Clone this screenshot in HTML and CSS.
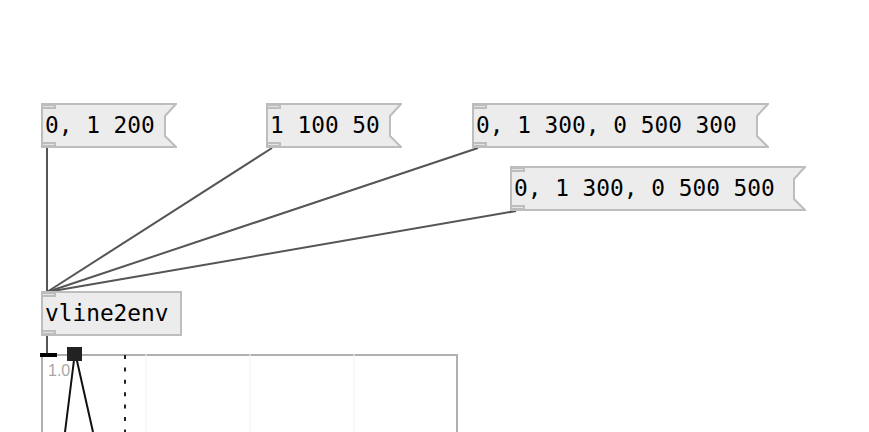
FILE: index.html
```html
<!DOCTYPE html>
<html lang="en">
<head>
  <meta charset="UTF-8">
  <meta name="viewport" content="width=device-width, initial-scale=1.0">
  <title>vline2env patch</title>
  <link rel="stylesheet" href="styles.css">
</head>
<body>
  <div class="patch">
    <!-- connections -->
    <svg class="wires" width="869" height="432">
      <line x1="47" y1="148" x2="47" y2="292" />
      <line x1="272" y1="148" x2="47" y2="292" />
      <line x1="478" y1="148" x2="47" y2="292" />
      <line x1="516" y1="211" x2="47" y2="292" />
      <line x1="47" y1="336" x2="47" y2="354" />
    </svg>

    <div class="node msg m1">
      <svg class="flag" width="136" height="45"><polygon points="1,1 135,1 124,13 124,33 135,44 1,44" /></svg>
      <span class="port in"></span><span class="port out"></span>
      <span class="label">0, 1 200</span>
    </div>
    <div class="node msg m2">
      <svg class="flag" width="136" height="45"><polygon points="1,1 135,1 124,13 124,33 135,44 1,44" /></svg>
      <span class="port in"></span><span class="port out"></span>
      <span class="label">1 100 50</span>
    </div>
    <div class="node msg m3">
      <svg class="flag" width="297" height="45"><polygon points="1,1 296,1 285,13 285,33 296,44 1,44" /></svg>
      <span class="port in"></span><span class="port out"></span>
      <span class="label">0, 1 300, 0 500 300</span>
    </div>
    <div class="node msg m4">
      <svg class="flag" width="296" height="45"><polygon points="1,1 295,1 284,13 284,33 295,44 1,44" /></svg>
      <span class="port in"></span><span class="port out"></span>
      <span class="label">0, 1 300, 0 500 500</span>
    </div>

    <div class="node obj o1">
      <span class="port in"></span><span class="port out"></span>
      <span class="label">vline2env</span>
    </div>

    <div class="node graph">
      <svg class="plot" width="417" height="120">
        <line class="grid" x1="105" y1="0" x2="105" y2="120" />
        <line class="grid" x1="209" y1="0" x2="209" y2="120" />
        <line class="grid" x1="313" y1="0" x2="313" y2="120" />
        <line class="cursor" x1="84" y1="1" x2="84" y2="120" />
        <polyline class="env" points="24,78 34,-2 52,78" />
        <rect class="handle" x="26" y="-7" width="15" height="14" />
        <rect class="inlet" x="-1" y="-1" width="17" height="4" />
      </svg>
      <span class="ylabel">1.0</span>
    </div>
  </div>
</body>
</html>
```

FILE: styles.css
```css
* {
  margin: 0;
  padding: 0;
  box-sizing: border-box;
}
body {
  background: #ffffff;
  overflow: hidden;
}
.patch {
  position: relative;
  width: 869px;
  height: 432px;
  overflow: hidden;
}
.wires {
  position: absolute;
  left: 0;
  top: 0;
}
.wires line {
  stroke: #555555;
  stroke-width: 2;
}
.node {
  position: absolute;
  height: 45px;
  font-family: "DejaVu Sans Mono", monospace;
  font-size: 22.8px;
  line-height: 45px;
  color: #000000;
}
.label {
  position: relative;
  padding-left: 4px;
  white-space: pre;
}
.flag {
  position: absolute;
  left: 0;
  top: 0;
}
.flag polygon {
  fill: #ececec;
  stroke: #bdbdbd;
  stroke-width: 2;
}
.port {
  position: absolute;
  left: 0;
  width: 15px;
  height: 5px;
  border: 2px solid #bdbdbd;
  background: #e4e4e4;
  z-index: 1;
}
.port.in {
  top: 1px;
}
.port.out {
  bottom: 1px;
}
.obj {
  background: #ececec;
  border: 2px solid #bdbdbd;
  line-height: 41px;
}
.obj .label {
  padding-left: 2px;
}
.obj .port {
  left: -2px;
}
.obj .port.in {
  top: -1px;
}
.obj .port.out {
  bottom: -1px;
}

.m1 { left: 41px; top: 103px; width: 136px; }
.m2 { left: 266px; top: 103px; width: 136px; }
.m3 { left: 472px; top: 103px; width: 297px; }
.m4 { left: 510px; top: 166px; width: 296px; }
.o1 { left: 41px; top: 291px; width: 141px; height: 45px; }

.graph {
  left: 41px;
  top: 354px;
  width: 417px;
  height: 120px;
  border: 2px solid #b0b0b0;
  background: #ffffff;
}
.plot {
  position: absolute;
  left: -2px;
  top: -2px;
  overflow: visible;
}
.plot .grid {
  stroke: #f2f2f2;
  stroke-width: 1;
}
.plot .cursor {
  stroke: #222222;
  stroke-width: 2;
  stroke-dasharray: 4 8.4;
}
.plot .env {
  fill: none;
  stroke: #111111;
  stroke-width: 2;
}
.plot .handle {
  fill: #222222;
}
.plot .inlet {
  fill: #000000;
}
.ylabel {
  position: absolute;
  left: 5px;
  top: 6px;
  font-family: "Liberation Sans", Arial, sans-serif;
  font-size: 16px;
  line-height: 18px;
  color: #a8a8a8;
}
```
